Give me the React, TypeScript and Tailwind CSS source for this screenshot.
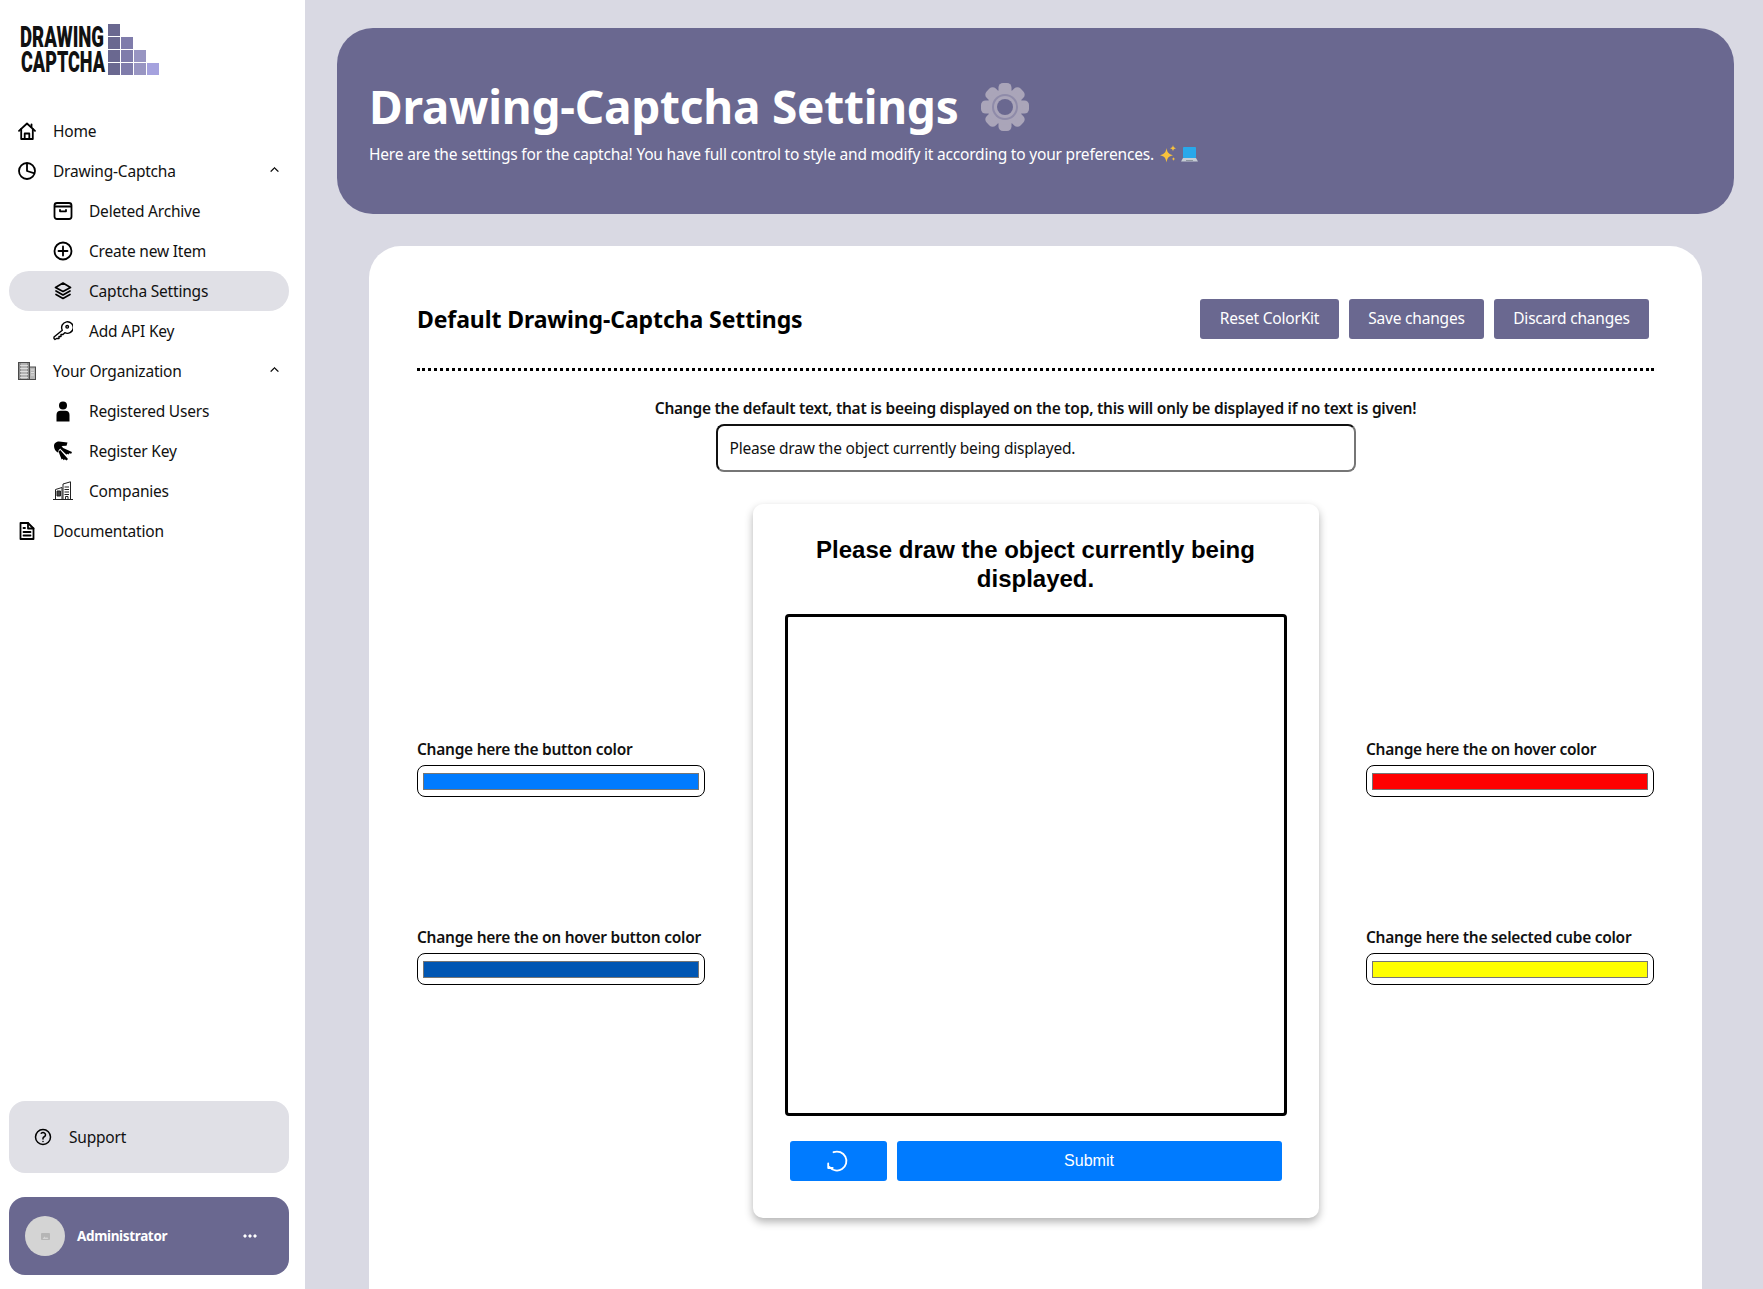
import React from 'react';
import { HiChevronUp, HiEllipsisHorizontal, HiOutlineQuestionMarkCircle } from 'react-icons/hi2';

const Logo = () => (
  <svg width="140" height="52" viewBox="0 0 140 52" className="ml-[20px] block overflow-visible">
    <g fontFamily="Roboto, sans-serif" fontWeight="900" fontSize="29" fill="#111">
      <text x="0" y="23" textLength="84" lengthAdjust="spacingAndGlyphs">DRAWING</text>
      <text x="1" y="48" textLength="84" lengthAdjust="spacingAndGlyphs">CAPTCHA</text>
    </g>
    <rect x="88" y="0" width="12" height="12" fill="#6a6890" />
    <rect x="88" y="13" width="12" height="12" fill="#6a6890" />
    <rect x="88" y="26" width="12" height="12" fill="#6a6890" />
    <rect x="88" y="39" width="12" height="12" fill="#6a6890" />
    <rect x="101" y="13" width="12" height="12" fill="#7f7cab" />
    <rect x="101" y="26" width="12" height="12" fill="#7f7cab" />
    <rect x="101" y="39" width="12" height="12" fill="#7f7cab" />
    <rect x="114" y="26" width="12" height="12" fill="#9895c2" />
    <rect x="114" y="39" width="12" height="12" fill="#9895c2" />
    <rect x="127" y="39" width="12" height="12" fill="#a5a2de" />
  </svg>
);

const Stroke = ({ children, w = 1.8 }: { children: React.ReactNode; w?: number }) => (
  <svg width="20" height="20" viewBox="0 0 20 20" fill="none" stroke="#000" strokeWidth={w} strokeLinecap="round" strokeLinejoin="round">
    {children}
  </svg>
);

const HomeIcon = () => (
  <Stroke>
    <path d="M2 9.800 10 2.500l8 7.300" />
    <path d="M4.200 8v10h11.600V8" />
    <path d="M7.700 18v-5.500h4.600V18" />
    <path d="M14.500 3.500v2.500" />
  </Stroke>
);

const PieIcon = () => (
  <Stroke>
    <circle cx="10" cy="10" r="8" />
    <path d="M10 2v8l7.600 2.400" strokeLinecap="butt" />
  </Stroke>
);

const ArchiveIcon = () => (
  <Stroke>
    <rect x="1.500" y="2" width="17" height="16" rx="2.500" />
    <path d="M2 5.500h16" />
    <path d="M7 8.800v1.500h6V8.800" />
  </Stroke>
);

const PlusCircleIcon = () => (
  <Stroke>
    <circle cx="10" cy="10" r="8.500" />
    <path d="M10 5.500v9M5.500 10h9" />
  </Stroke>
);

const LayersIcon = () => (
  <Stroke w={1.7}>
    <path d="M10 2 17.500 6.500 10 10.500 2.500 6.500z" />
    <path d="M3 10l7 4 7-4" />
    <path d="M3 13.500l7 4 7-4" />
  </Stroke>
);

const KeyIcon = () => (
  <Stroke w={1.4}>
    <path d="M9.300 9.200a5.800 5.800 0 1 1 2.500 2.500L10 13.500H8v2H6v2H3.500l-1.500 1L1 17.500v-1.500z" />
    <circle cx="14.200" cy="5.800" r="1.300" />
  </Stroke>
);

const DocIcon = () => (
  <Stroke w={1.8}>
    <path d="M3.500 2h7.500l5.500 5.500V18h-13z" />
    <path d="M11 2v5.500h5.500" />
    <path d="M6.500 7h1.500M6.500 11h7M6.500 14.500h7" />
  </Stroke>
);

const BuildingIcon = () => (
  <svg width="20" height="20" viewBox="0 0 20 20" fill="none" stroke="#4a4a4a">
    <rect x="1.500" y="1.500" width="11" height="17" fill="#8f8f8f" strokeWidth="1" />
    <rect x="12.500" y="6" width="6" height="12.500" fill="#b5b5b5" strokeWidth="1" />
    <path d="M3 4.500h8M3 7.500h8M3 10.500h8M3 13.500h8M3 16.500h8M5 2v16M7 2v16M9 2v16M14 9h3M14 11.500h3M14 14h3" stroke="#e8e8e8" strokeWidth="0.800" />
  </svg>
);

const PersonIcon = () => (
  <svg width="20" height="21" viewBox="0 0 20 21" fill="#000">
    <circle cx="10" cy="4.500" r="4" />
    <path d="M3.500 20.500v-6.500c0-2.800 1.700-4.200 4-4.200h5c2.300 0 4 1.400 4 4.200v6.500z" />
  </svg>
);

const KeysIcon = () => (
  <svg width="20" height="21" viewBox="0 0 20 21" fill="#000">
    <path d="M1 5C1 2 3.500.5 6 .5l8.500 1-1 3.200-5 .3 1.500 1.500-2.500 1C6 8.500 5 10 5.200 11.800 2.500 10.500 1 7.800 1 5z" />
    <path d="M7 7.500l2-1 10 4.500-.8 1.800-2-.5-.6 1.200-1.600-.7-.5 1z" />
    <path d="M5.500 10.500l1.700-1.500 7.800 9-1.500 1.500-1.700-1.300-1 1-1.300-1.500-.9.700z" />
  </svg>
);

const CompaniesIcon = () => (
  <svg width="20" height="20" viewBox="0 0 20 20" fill="none" stroke="#222" strokeWidth="1">
    <path d="M0 18.500h20" />
    <path d="M2.500 18.500V8.500l6.500-2v12" />
    <path d="M10 18.500V3l7.500-2.200v17.700" />
    <path d="M4 10h3.500v5H4z" fill="#444" />
    <path d="M11.500 6h4.500M11.500 8.500h4.500M11.500 11h4.500M11.500 13.500h4.500" strokeWidth="1.200" />
    <path d="M12.500 18.500v-3h2.500v3" />
  </svg>
);

const GearIcon = () => (
  <svg width="50" height="50" viewBox="0 0 50 50">
    {[0, 45, 90, 135].map(a => (
      <rect key={a} x="18.500" y="1" width="13" height="48" rx="4.500" fill="#aaa5b9" transform={`rotate(${a} 25 25)`} />
    ))}
    <circle cx="25" cy="25" r="17.500" fill="#aaa5b9" />
    <circle cx="25" cy="25" r="13" fill="#8f8ba9" />
    <circle cx="25" cy="25" r="11" fill="#aaa5b9" />
    <circle cx="25" cy="25" r="8" fill="#6a6890" />
  </svg>
);

const SparkleIcon = () => (
  <svg width="18" height="18" viewBox="0 0 18 18" fill="#f9c23c">
    <path d="M7.500 3c.7 4.500 2 6 6.500 7.200-4.500 1.200-5.800 2.700-6.500 7.300-.7-4.600-2-6.100-6.500-7.300C5.500 9 6.800 7.500 7.500 3z" />
    <path d="M14 0c.3 2 1 2.700 3 3.200-2 .5-2.700 1.200-3 3.200-.3-2-1-2.700-3-3.200 2-.5 2.700-1.200 3-3.200z" />
    <path d="M14.500 12c.2 1.300.6 1.700 1.900 2-1.300.3-1.700.7-1.900 2-.2-1.300-.6-1.700-1.900-2 1.300-.3 1.700-.7 1.900-2z" />
  </svg>
);

const LaptopIcon = () => (
  <svg width="17" height="17" viewBox="0 0 17 17">
    <rect x="2" y="1" width="13" height="11" rx="0.800" fill="#29a8ea" />
    <path d="M2 12h13l2 3.500H0z" fill="#c5ccd3" />
    <path d="M5 14h7v1H5z" fill="#8c959e" />
  </svg>
);

const ReloadIcon = () => (
  <svg width="24" height="24" viewBox="0 0 24 24" fill="none" stroke="#fff" strokeWidth="1.800" strokeLinecap="round" strokeLinejoin="round">
    <path d="M8.500 3.200A9.500 9.500 0 1 1 4.500 18" />
    <path d="M3.200 14.500V19h4.500" />
  </svg>
);

const NavItem = ({ icon, label, sub, active, open }: { icon: React.ReactNode; label: string; sub?: boolean; active?: boolean; open?: boolean }) => (
  <div className={`flex items-center h-10 rounded-[20px] ${sub ? 'pl-[44px]' : 'pl-2'} ${active ? 'bg-[#e0e0e6]' : ''}`}>
    <span className="w-5 h-5 flex items-center justify-center text-black shrink-0">{icon}</span>
    <span className="ml-[16px] pt-px text-[15.5px] tracking-[-0.2px] text-[#111]">{label}</span>
    {open && <HiChevronUp className="ml-auto mr-[9px] mb-[3px] text-[11px] text-black" strokeWidth={1.5} />}
  </div>
);

const Sidebar = () => (
  <aside className="w-[305px] shrink-0 bg-white h-full flex flex-col pt-6 pb-[14px] pl-[9px] pr-4">
    <div className="-ml-[9px]">
      <Logo />
    </div>
    <nav className="mt-[35px] flex flex-col">
      <NavItem icon={<HomeIcon />} label="Home" />
      <NavItem icon={<PieIcon />} label="Drawing-Captcha" open />
      <NavItem sub icon={<ArchiveIcon />} label="Deleted Archive" />
      <NavItem sub icon={<PlusCircleIcon />} label="Create new Item" />
      <NavItem sub active icon={<LayersIcon />} label="Captcha Settings" />
      <NavItem sub icon={<KeyIcon />} label="Add API Key" />
      <NavItem icon={<BuildingIcon />} label="Your Organization" open />
      <NavItem sub icon={<PersonIcon />} label="Registered Users" />
      <NavItem sub icon={<KeysIcon />} label="Register Key" />
      <NavItem sub icon={<CompaniesIcon />} label="Companies" />
      <NavItem icon={<DocIcon />} label="Documentation" />
    </nav>
    <div className="mt-auto h-[72px] rounded-2xl bg-[#e0e0e6] flex items-center pl-6">
      <HiOutlineQuestionMarkCircle className="text-[20px] text-black" strokeWidth={1.800} />
      <span className="ml-[16px] pt-px text-[15.5px] tracking-[-0.2px] text-[#111]">Support</span>
    </div>
    <div className="mt-6 h-[78px] rounded-2xl bg-[#6a6890] flex items-center pl-4 pr-[29px]">
      <div className="w-10 h-10 rounded-full bg-[#d4d4d4] flex items-center justify-center">
        <svg width="9" height="7" viewBox="0 0 9 7"><rect width="9" height="7" rx="1" fill="#b5b5b5" /><path d="M1.500 6l2-2.500 1.500 1.500 1-1 1.500 2z" fill="#d4d4d4" /></svg>
      </div>
      <span className="ml-3 pt-px text-[13.5px] tracking-[-0.35px] font-bold text-white">Administrator</span>
      <HiEllipsisHorizontal className="ml-auto text-[20px] text-white" strokeWidth={1} />
    </div>
  </aside>
);

const ColorField = ({ label, color }: { label: string; color: string }) => (
  <div>
    <div className="text-[15.5px] tracking-[-0.27px] leading-6 font-semibold text-[#111] whitespace-nowrap mb-[4px]">{label}</div>
    <div className="h-8 rounded-lg border border-black bg-white flex items-center px-[5px]">
      <input
        type="text"
        readOnly
        aria-label={label}
        className="block w-full h-[17px] border border-[#767676]"
        style={{ backgroundColor: color }}
      />
    </div>
  </div>
);

const CaptchaPreview = () => (
  <div className="w-[566px] bg-white rounded-[10px] shadow-[0_4px_8px_rgba(0,0,0,0.3)] pt-[31px] pb-[37px] flex flex-col items-center font-['Liberation_Sans',Arial,sans-serif]">
    <h3 className="w-[470px] text-center text-[24px] leading-[29px] font-bold text-black">
      Please draw the object currently being displayed.
    </h3>
    <div className="mt-[21px] w-[502px] h-[502px] border-[3px] border-black rounded-[4px] bg-white" />
    <div className="mt-[25px] flex gap-[10px]">
      <button className="w-[97px] h-10 rounded-[3px] bg-[#007bff] flex items-center justify-center">
        <span className="-ml-[2px]"><ReloadIcon /></span>
      </button>
      <button className="w-[385px] h-10 rounded-[3px] bg-[#007bff] text-white text-[16px]">Submit</button>
    </div>
  </div>
);

export default function App() {
  return (
    <div className="h-screen w-full overflow-hidden flex bg-[#d9d9e3] font-['Noto_Sans','Open_Sans',sans-serif]">
      <Sidebar />
      <main className="flex-1 min-w-0 h-full overflow-hidden pt-7">
        {/* Header */}
        <div className="ml-8 mr-[29px] h-[186px] rounded-[36px] bg-[#6a6890] pl-8 pt-[44px] text-white">
          <div className="flex items-center">
            <h1 className="text-[46px] tracking-[-0.25px] leading-[68px] font-bold whitespace-nowrap">Drawing-Captcha Settings</h1>
            <span className="ml-[21px] mt-[2px]"><GearIcon /></span>
          </div>
          <div className="flex items-center mt-[2px] text-[15.5px] tracking-[-0.19px] leading-6">
            <span>Here are the settings for the captcha! You have full control to style and modify it according to your preferences.</span>
            <span className="ml-[5px]"><SparkleIcon /></span>
            <span className="ml-[4px]"><LaptopIcon /></span>
          </div>
        </div>

        {/* Content */}
        <div className="ml-16 mr-[61px] mt-8 h-[1100px] rounded-t-[32px] bg-white px-12 pt-[53px]">
          <div className="flex items-center justify-between pr-[5px]">
            <h2 className="text-[23px] tracking-[-0.1px] font-bold text-black">Default Drawing-Captcha Settings</h2>
            <div className="flex gap-[10px]">
              <button className="w-[139px] h-10 rounded-[3px] bg-[#6a6890] text-white text-[15.5px] tracking-[-0.2px]">Reset ColorKit</button>
              <button className="w-[135px] h-10 rounded-[3px] bg-[#6a6890] text-white text-[15.5px] tracking-[-0.2px]">Save changes</button>
              <button className="w-[155px] h-10 rounded-[3px] bg-[#6a6890] text-white text-[15.5px] tracking-[-0.2px]">Discard changes</button>
            </div>
          </div>
          <div className="mt-[29px] border-b-[3px] border-dotted border-black" />

          <div className="mt-[25px] text-center text-[15.5px] tracking-[-0.25px] leading-6 font-semibold text-[#111]">
            Change the default text, that is beeing displayed on the top, this will only be displayed if no text is given!
          </div>
          <input
            type="text"
            readOnly
            value="Please draw the object currently being displayed."
            className="block mx-auto mt-1 w-[640px] h-12 rounded-lg border-2 border-t-[#111] border-l-[#111] border-r-[#767676] border-b-[#767676] pl-3 text-[15.5px] tracking-[-0.22px] text-[#111] outline-none"
          />

          <div className="mt-8 flex items-center justify-between">
            <div className="w-[288px] flex flex-col gap-[128px]">
              <ColorField label="Change here the button color" color="#007bff" />
              <ColorField label="Change here the on hover button color" color="#0056b3" />
            </div>
            <CaptchaPreview />
            <div className="w-[288px] flex flex-col gap-[128px]">
              <ColorField label="Change here the on hover color" color="#ff0000" />
              <ColorField label="Change here the selected cube color" color="#ffff00" />
            </div>
          </div>
        </div>
      </main>
    </div>
  );
}
